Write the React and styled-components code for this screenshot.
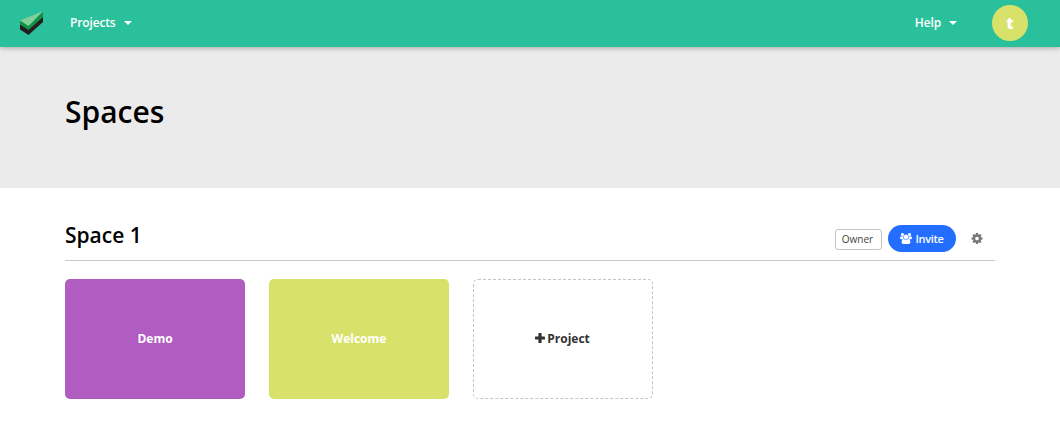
import React from "react";
import styled, { createGlobalStyle } from "styled-components";

const Global = createGlobalStyle`
  *, *::before, *::after { box-sizing: border-box; }
  body { margin: 0; background: #fff; color: #000; font-family: "Open Sans", "Noto Sans", sans-serif; font-size: 13px; }
  h1, h2 { margin: 0; font-weight: 600; }
  button { font: inherit; border: 0; background: none; padding: 0; }
`;

const TopBar = styled.header`
  position: relative;
  display: flex;
  align-items: center;
  height: 47px;
  padding: 0 32px 1px 19px;
  background: #2bc09c;
  box-shadow: 0 1px 5px rgba(0, 0, 0, 0.3);
`;
const Logo = styled.svg`
  width: 25px;
  height: 26px;
`;
const NavMenu = styled.button`
  display: flex;
  align-items: center;
  gap: 8px;
  color: #fff;
  font-size: 12px;
  font-weight: 600;
  letter-spacing: -0.15px;
  line-height: 18px;
  margin-left: ${(p) => (p.$end ? "auto" : "26px")};
`;
const Caret = styled.span`
  border: 4px solid transparent;
  border-top-color: #fff;
  border-bottom: 0;
`;
const Avatar = styled.div`
  display: grid;
  place-items: center;
  width: 36px;
  height: 36px;
  margin-left: 35px;
  border-radius: 50%;
  background: #d8e26b;
  color: #fff;
  font-size: 16px;
  font-weight: 800;
  line-height: 36px;
`;
const Banner = styled.section`
  height: 141px;
  padding: 43px 65px 0;
  background: #ebebeb;
`;
const PageTitle = styled.h1`
  font-size: 30px;
  line-height: 44px;
`;
const Main = styled.main`
  padding: 29px 65px;
`;
const SpaceHeader = styled.div`
  display: flex;
  align-items: center;
  height: 44px;
  padding-right: 12px;
  border-bottom: 1px solid #c8c8c8;
`;
const SpaceTitle = styled.h2`
  flex: 1;
  font-size: 21px;
  line-height: 30px;
  margin-top: -8px;
`;
const RoleTag = styled.span`
  width: 47px;
  height: 21px;
  margin-top: 2px;
  padding-right: 2px;
  border: 1px solid #c4c4c4;
  border-radius: 3px;
  color: #444;
  font-size: 10px;
  line-height: 19px;
  text-align: center;
`;
const InviteButton = styled.button`
  display: flex;
  align-items: center;
  justify-content: center;
  gap: 3px;
  width: 68px;
  height: 27px;
  margin: 0 15px 0 6px;
  border-radius: 14px;
  background: #236eff;
  color: #fff;
  font-size: 11px;
  font-weight: 600;
  letter-spacing: -0.3px;
`;
const Icon = styled.svg`
  display: block;
  width: ${(p) => p.$w}px;
  height: ${(p) => p.$h}px;
  fill: currentColor;
`;
const SettingsButton = styled.button`
  color: #777;
`;
const Tiles = styled.div`
  display: flex;
  gap: 24px;
  margin-top: 18px;
`;
const Tile = styled.div`
  display: flex;
  align-items: center;
  justify-content: center;
  gap: 2px;
  width: 180px;
  height: 120px;
  padding-bottom: 2px;
  border-radius: 5px;
  background: ${(p) => p.$color};
  color: #fff;
  font-size: 12px;
  font-weight: 700;
`;
const NewTile = styled(Tile)`
  padding-right: 1px;
  background: #fff;
  border: 1px dashed #c4c4c4;
  color: #333;
`;

const USERS =
  "M593 896q-162 5-265 128h-134q-82 0-138-40.5t-56-118.5q0-353 124-353 6 0 43.5 21t97.5 42.5 119 21.5q67 0 133-23-5 37-5 66 0 139 81 256zm1071 637q0 120-73 189.5t-194 69.5h-874q-121 0-194-69.5t-73-189.5q0-53 3.5-103.5t14-109 26.5-108.5 43-97.5 62-81 85.5-53.5 111.5-20q10 0 43 21.5t73 48 107 48 135 21.5 135-21.5 107-48 73-48 43-21.5q61 0 111.5 20t85.5 53.5 62 81 43 97.5 26.5 108.5 14 109 3.5 103.5zm-1024-1277q0 106-75 181t-181 75-181-75-75-181 75-181 181-75 181 75 75 181zm704 384q0 159-112.5 271.5t-271.5 112.5-271.5-112.5-112.5-271.5 112.5-271.5 271.5-112.5 271.5 112.5 112.5 271.5zm576 225q0 78-56 118.5t-138 40.5h-134q-103-123-265-128 81-117 81-256 0-29-5-66 66 23 133 23 59 0 119-21.5t97.5-42.5 43.5-21q124 0 124 353zm-128-609q0 106-75 181t-181 75-181-75-75-181 75-181 181-75 181 75 75 181z";
const COG =
  "M1152 896q0-106-75-181t-181-75-181 75-75 181 75 181 181 75 181-75 75-181zm512-109v222q0 12-8 23t-20 13l-185 28q-19 54-39 91 35 50 107 138 10 12 10 25t-9 23q-27 37-99 108t-94 71q-12 0-26-9l-138-108q-44 23-91 38-16 136-29 186-7 28-36 28h-222q-14 0-24.5-8.5t-11.5-21.5l-28-184q-49-16-90-37l-141 107q-10 9-25 9-14 0-25-11-126-114-165-168-7-10-7-23 0-12 8-23 15-21 51-66.5t54-70.5q-27-50-41-99l-183-27q-13-2-21-12.5t-8-23.5v-222q0-12 8-23t19-13l186-28q14-46 39-92-40-57-107-138-10-12-10-24 0-10 9-23 26-36 98.5-107.5t94.5-71.5q13 0 26 10l138 107q44-23 91-38 16-136 29-186 7-28 36-28h222q14 0 24.5 8.5t11.5 21.5l28 184q49 16 90 37l142-107q9-9 24-9 13 0 25 10 129 119 165 170 7 8 7 22 0 12-8 23-15 21-51 66.5t-54 70.5q26 50 41 98l183 28q13 2 21 12.5t8 23.5z";

export default function App() {
  return (
    <>
      <Global />
      <TopBar>
        <Logo viewBox="0 0 25 26" aria-label="Home">
          <path d="M1 14v5.500L9.500 25 24 12V6L9.500 19z" fill="#231f20" />
          <path d="M1 10.500v4l8.500 5.500L24 7V1.300L9.500 14z" fill="#109347" />
          <path d="M1 10.500 24 1.300 9.500 16z" fill="#7fd09a" />
        </Logo>
        <NavMenu>
          Projects
          <Caret />
        </NavMenu>
        <NavMenu $end>
          Help
          <Caret />
        </NavMenu>
        <Avatar>t</Avatar>
      </TopBar>
      <Banner>
        <PageTitle>Spaces</PageTitle>
      </Banner>
      <Main>
        <SpaceHeader>
          <SpaceTitle>Space 1</SpaceTitle>
          <RoleTag>Owner</RoleTag>
          <InviteButton>
            <Icon $w={12} $h={11} viewBox="0 0 1920 1792">
              <path d={USERS} />
            </Icon>
            Invite
          </InviteButton>
          <SettingsButton aria-label="Space settings">
            <Icon $w={12} $h={11} viewBox="128 128 1536 1536">
              <path d={COG} />
            </Icon>
          </SettingsButton>
        </SpaceHeader>
        <Tiles>
          <Tile $color="#b05cc1">Demo</Tile>
          <Tile $color="#d8e26b">Welcome</Tile>
          <NewTile>
            <Icon $w={10} $h={10} viewBox="0 0 10 10">
              <path d="M4 0h2q.6 0 .6.600v2.900H9.400q.6 0 .6.600v1.900q0 .6-.6.600H6.600v2.800q0 .6-.6.600H4q-.6 0-.6-.600V6.600H.6Q0 6.600 0 6V4.100q0-.6.600-.600h2.800V.6Q3.400 0 4 0z" />
            </Icon>
            Project
          </NewTile>
        </Tiles>
      </Main>
    </>
  );
}
